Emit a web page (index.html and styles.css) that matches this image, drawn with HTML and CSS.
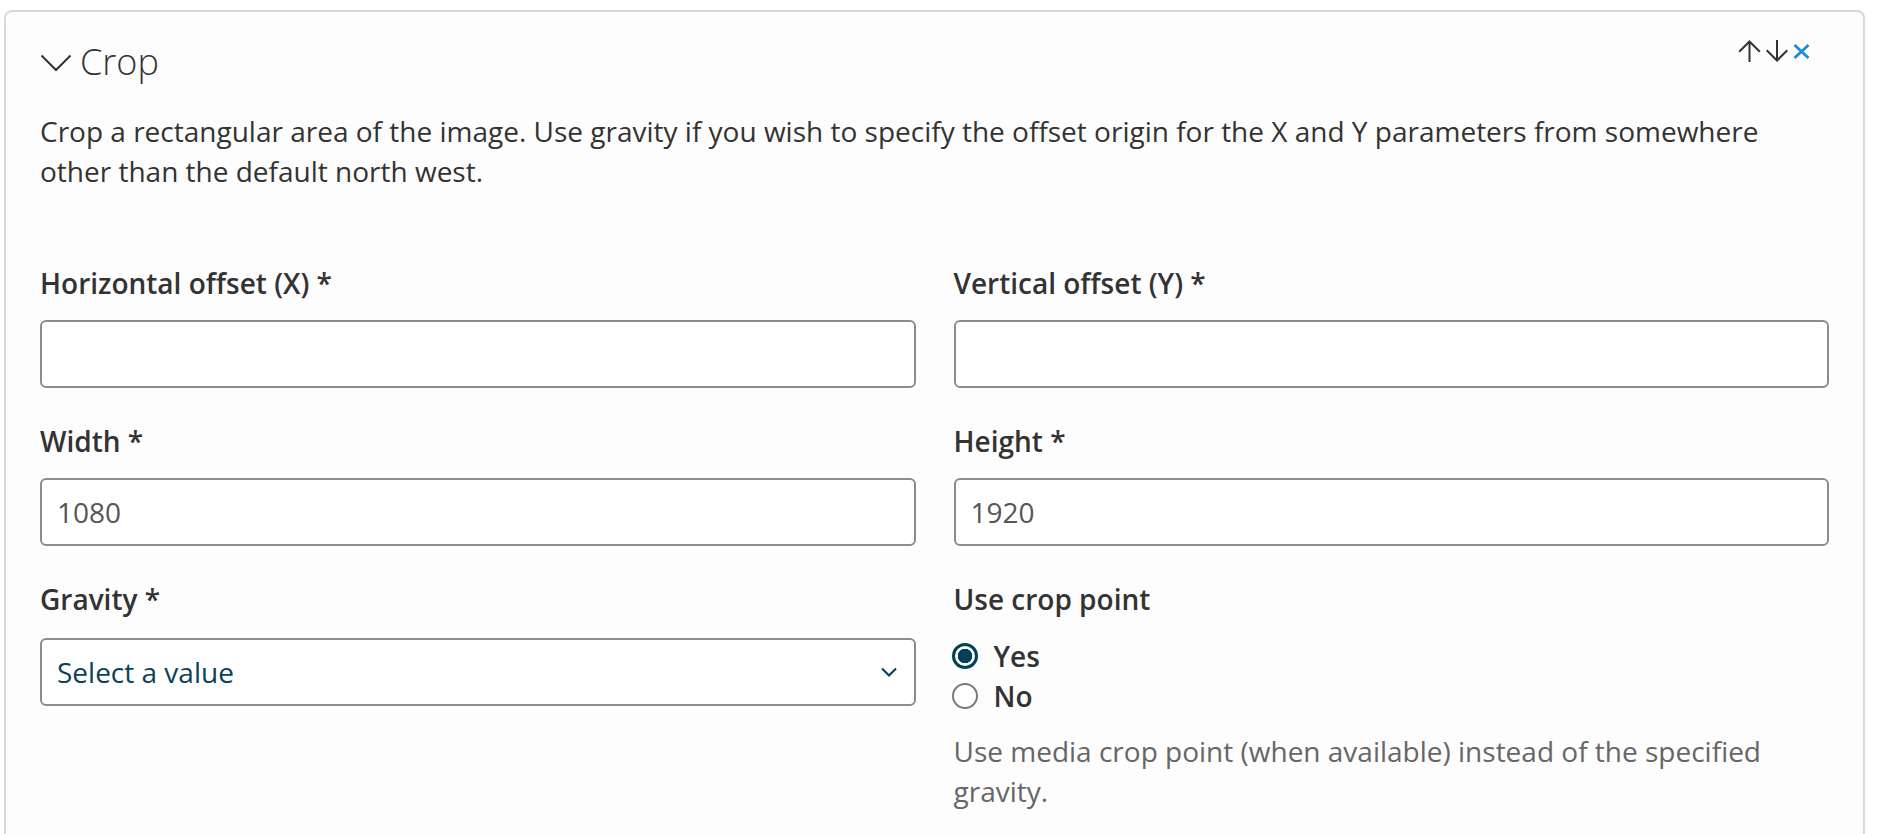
FILE: index.html
```html
<!DOCTYPE html>
<html lang="en">
<head>
<meta charset="utf-8">
<title>Crop</title>
<link rel="stylesheet" href="styles.css">
</head>
<body>
<section class="card">
  <header class="card-header">
    <div class="title-wrap">
      <svg class="collapse-icon" width="32" height="18" viewBox="0 0 32 18" aria-hidden="true"><path d="M1.5 1.5 L16 16 L30.5 1.5" fill="none" stroke="#333" stroke-width="2"/></svg>
      <h2 class="title">Crop</h2>
    </div>
    <div class="actions">
      <svg class="act" width="23" height="22" viewBox="0 0 23 22" aria-hidden="true"><path d="M11.5 22V1.5 M1.2 11.8 L11.5 1.5 L21.8 11.8" fill="none" stroke="#333" stroke-width="2"/></svg>
      <svg class="act" width="22" height="22" viewBox="0 0 22 22" aria-hidden="true"><path d="M11 0V20.5 M0.7 10.2 L11 20.5 L21.3 10.2" fill="none" stroke="#333" stroke-width="2"/></svg>
      <svg class="act close" width="17" height="15" viewBox="0 0 17 15" aria-hidden="true"><path d="M1.5 1 L15.5 14 M15.5 1 L1.5 14" fill="none" stroke="#1b8fd2" stroke-width="2.8"/></svg>
    </div>
  </header>
  <p class="description">Crop a rectangular area of the image. Use gravity if you wish to specify the offset origin for the X and Y parameters from somewhere other than the default north west.</p>
  <div class="fields">
    <div class="field">
      <label class="label">Horizontal offset (X) *</label>
      <input class="input" type="text" value="">
    </div>
    <div class="field">
      <label class="label">Vertical offset (Y) *</label>
      <input class="input" type="text" value="">
    </div>
    <div class="field">
      <label class="label">Width *</label>
      <input class="input" type="text" value="1080">
    </div>
    <div class="field">
      <label class="label">Height *</label>
      <input class="input" type="text" value="1920">
    </div>
    <div class="field">
      <label class="label">Gravity *</label>
      <div class="select">
        <span class="select-text">Select a value</span>
        <svg width="16" height="11" viewBox="0 0 16 11" aria-hidden="true"><path d="M1 1.5 L8 8.5 L15 1.5" fill="none" stroke="#0b4259" stroke-width="2.2"/></svg>
      </div>
    </div>
    <div class="field">
      <span class="label">Use crop point</span>
      <div class="radios">
        <label class="radio"><span class="dot checked"></span><span class="radio-text">Yes</span></label>
        <label class="radio"><span class="dot"></span><span class="radio-text">No</span></label>
      </div>
      <p class="help">Use media crop point (when available) instead of the specified gravity.</p>
    </div>
  </div>
</section>
</body>
</html>
```

FILE: styles.css
```css
html, body {
  margin: 0;
  padding: 0;
  background: #ffffff;
}

body {
  font-family: "Open Sans", "Liberation Sans", sans-serif;
  color: #333333;
  overflow: hidden;
}

.card {
  box-sizing: border-box;
  width: 1861px;
  min-height: 840px;
  margin: 10px 0 0 4px;
  padding: 26px 34px 0 34px;
  background: #fdfdfd;
  border: 2px solid #d9d9d9;
  border-bottom: none;
  border-radius: 8px 8px 0 0;
}

.card-header {
  display: flex;
  justify-content: space-between;
  align-items: flex-start;
  height: 48px;
}

.title-wrap {
  display: flex;
  align-items: flex-start;
}

.collapse-icon {
  display: block;
  margin-top: 16px;
  margin-right: 8px;
}

.title {
  margin: 0;
  font-size: 36px;
  line-height: 48px;
  font-weight: 300;
  color: #333333;
}

.actions {
  display: flex;
  align-items: flex-start;
  margin-top: 2px;
  margin-right: 19px;
}

.act {
  display: block;
  margin-left: 5px;
}

.act.close {
  margin-top: 4px;
  margin-left: 5px;
}

.description {
  margin: 25px 0 0 0;
  font-size: 28px;
  line-height: 40px;
  color: #333333;
}

.fields {
  display: grid;
  grid-template-columns: 1fr 1fr;
  column-gap: 38px;
  row-gap: 33px;
  margin-top: 72px;
}

.field {
  display: flex;
  flex-direction: column;
}

.label {
  font-size: 28px;
  line-height: 40px;
  font-weight: 600;
  color: #333333;
  margin-bottom: 17px;
}

.input {
  box-sizing: border-box;
  width: 100%;
  height: 68px;
  margin: 0;
  padding: 0 15px;
  border: 2px solid #8c8c8c;
  border-radius: 6px;
  background: #ffffff;
  font-family: "Open Sans", "Liberation Sans", sans-serif;
  font-size: 28px;
  color: #555555;
  outline: none;
}

.select {
  box-sizing: border-box;
  height: 68px;
  display: flex;
  align-items: center;
  justify-content: space-between;
  padding: 0 17px 0 15px;
  border: 2px solid #8c8c8c;
  border-radius: 6px;
  background: #ffffff;
  margin-top: 2px;
}

.select-text {
  font-size: 28px;
  color: #0b4259;
}

.radios {
  display: flex;
  flex-direction: column;
}

.radio {
  display: flex;
  align-items: center;
  height: 40px;
}

.dot {
  box-sizing: border-box;
  width: 26px;
  height: 26px;
  border-radius: 50%;
  border: 2px solid #7a7a7a;
  background: #ffffff;
  margin-left: -2px;
  margin-right: 16px;
}

.dot.checked {
  border: 3px solid #03405a;
  background: radial-gradient(circle, #03405a 0 7px, #ffffff 7.5px);
}

.radio-text {
  font-size: 28px;
  font-weight: 600;
  color: #333333;
}

.help {
  margin: 15px 0 0 0;
  font-size: 28px;
  line-height: 40px;
  color: #666666;
}
```
